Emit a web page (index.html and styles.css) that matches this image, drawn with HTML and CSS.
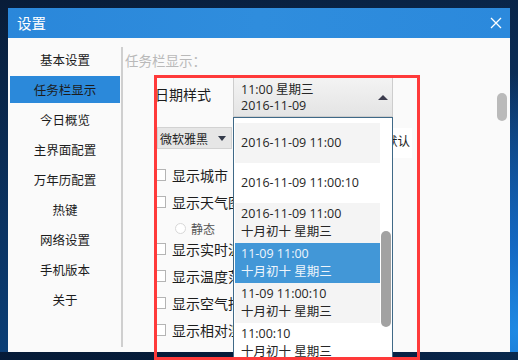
FILE: index.html
```html
<!DOCTYPE html>
<html lang="zh-CN">
<head>
  <meta charset="UTF-8" />
  <title>设置</title>
  <link rel="stylesheet" href="styles.css">
</head>
<body>
  <div class="window">
    <div class="titlebar">
      <span class="title">设置</span>
      <svg class="close" width="12" height="12" viewBox="0 0 12 12">
        <path d="M1 1L11 11M11 1L1 11" stroke="#fff" stroke-width="1.3" fill="none" />
      </svg>
    </div>

    <div class="main">
      <div class="sidebar">
        <div class="nav-item">基本设置</div>
        <div class="nav-item active">任务栏显示</div>
        <div class="nav-item">今日概览</div>
        <div class="nav-item">主界面配置</div>
        <div class="nav-item">万年历配置</div>
        <div class="nav-item">热键</div>
        <div class="nav-item">网络设置</div>
        <div class="nav-item">手机版本</div>
        <div class="nav-item">关于</div>
      </div>
      <div class="divider"></div>

      <div class="content">
        <div class="panel">
          <div class="heading">任务栏显示：</div>

          <div class="form">
            <div class="date-row">
              <span class="label">日期样式</span>
              <div class="combo">
                <div class="combo-box">
                  <div class="combo-text">
                    <div>11:00 星期三</div>
                    <div>2016-11-09</div>
                  </div>
                  <span class="arrow-up"></span>
                </div>

                <!-- open dropdown list -->
                <div class="dropdown">
                  <div class="rows">
                    <div class="opt">2016-11-09 11:00</div>
                    <div class="opt">2016-11-09 11:00:10</div>
                    <div class="opt"><div>2016-11-09 11:00</div><div>十月初十 星期三</div></div>
                    <div class="opt selected"><div>11-09 11:00</div><div>十月初十 星期三</div></div>
                    <div class="opt"><div>11-09 11:00:10</div><div>十月初十 星期三</div></div>
                    <div class="opt"><div>11:00:10</div><div>十月初十 星期三</div></div>
                  </div>
                  <div class="track"><div class="thumb"></div></div>
                </div>
              </div>
            </div>

            <div class="font-row">
              <div class="select">微软雅黑<span class="arrow-down"></span></div>
              <div class="btn-default">默认</div>
            </div>

            <div class="checks">
              <div class="check"><span class="box"></span>显示城市</div>
              <div class="check"><span class="box"></span>显示天气图标</div>
              <div class="radio-row"><span class="radio"></span>静态</div>
              <div class="check"><span class="box"></span>显示实时温度</div>
              <div class="check"><span class="box"></span>显示温度范围</div>
              <div class="check"><span class="box"></span>显示空气指数</div>
              <div class="check"><span class="box"></span>显示相对湿度</div>
            </div>
          </div>
        </div>
        <div class="vscroll"></div>
      </div>
    </div>

    <!-- red highlight frame -->
    <div class="callout"></div>
  </div>
</body>
</html>
```

FILE: styles.css
```css
html, body {
  height: 100%;
}

body {
  margin: 0;
  overflow: hidden;
  font-family: "Noto Sans CJK SC", sans-serif;
  background:
    linear-gradient(to bottom, transparent 352px, rgba(4, 18, 40, 0.8) 352px),
    radial-gradient(circle at 100% 92%, #1f8ae4 0, #1468c2 14%, transparent 42%),
    linear-gradient(170deg, #081c38 0%, #0b3362 50%, #0b4785 100%);
}

.window {
  position: relative;
  width: 502px;
  height: 344px;
  margin: 8px 0 0 8px;
  background-color: #fafafa;
}

.titlebar {
  display: flex;
  align-items: center;
  justify-content: space-between;
  height: 30px;
  padding: 0 8px 0 9px;
  background: linear-gradient(90deg, #2a87da, #2f8ddd 50%, #2b89dc);
  color: white;
}

.title {
  font-size: 14.5px;
  line-height: 20px;
}

.main {
  display: flex;
  height: 314px;
}

.sidebar {
  width: 113px;
  padding-top: 8px;
  box-sizing: border-box;
}

.nav-item {
  height: 27px;
  margin: 0 1px 3px 2px;
  line-height: 27px;
  text-align: center;
  font-size: 12.5px;
  color: #1c1c1c;
}

.nav-item.active {
  background-color: #2b89da;
}

.divider {
  width: 2px;
  margin: 9px 0 5px;
  background-color: #cfcfcf;
}

.content {
  flex: 1;
  display: flex;
}

.panel {
  flex: 1;
  padding: 13px 0 0 2px;
}

.vscroll {
  width: 10px;
  height: 28px;
  margin: 55px 3px 0 0;
  border-radius: 5px;
  background-color: #bababa;
}

.heading {
  font-size: 13.5px;
  line-height: 18px;
  color: #b9b9b9;
}

.form {
  margin: 8px 0 0 30px;
}

.date-row {
  display: flex;
  align-items: flex-start;
}

.label {
  width: 78px;
  padding-top: 8px;
  font-size: 14px;
  line-height: 18px;
  color: #1c1c1c;
}

.combo {
  position: relative;
  width: 160px;
}

.combo-box {
  display: flex;
  align-items: center;
  justify-content: space-between;
  height: 40px;
  box-sizing: border-box;
  padding: 1px 4px 0 7px;
  border: 1px solid #cdcdcd;
  background: linear-gradient(#f3f3f3, #e4e4e4);
}

.combo-text,
.opt {
  font-family: "Open Sans", "Noto Sans CJK SC", sans-serif;
  font-size: 12.5px;
  color: #262626;
}

.combo-text {
  line-height: 16px;
}

.arrow-up {
  width: 0;
  height: 0;
  border-left: 5px solid transparent;
  border-right: 5px solid transparent;
  border-bottom: 5px solid #3b3b4d;
}

.dropdown {
  position: absolute;
  top: 100%;
  left: 0;
  z-index: 2;
  display: flex;
  width: 160px;
  height: 245px;
  box-sizing: border-box;
  border: 1px solid #3f6987;
  border-bottom: none;
  background-color: white;
}

.rows {
  width: 145px;
  margin-left: 1px;
  padding-top: 5px;
}

.opt {
  display: flex;
  flex-direction: column;
  justify-content: center;
  height: 40px;
  padding-left: 6px;
  line-height: 18px;
  white-space: nowrap;
}

.opt:nth-child(odd) {
  background-color: #f4f4f4;
}

.opt.selected {
  background-color: #4297d7;
  color: #eef5fc;
}

.track {
  width: 12px;
}

.thumb {
  width: 10px;
  height: 96px;
  margin: 113px 0 0 1px;
  border-radius: 5px;
  background-color: #a2a2a2;
}

.font-row {
  display: flex;
  align-items: flex-start;
  margin-top: 10px;
}

.select {
  display: flex;
  align-items: center;
  justify-content: space-between;
  width: 75px;
  height: 22px;
  box-sizing: border-box;
  margin-left: 2px;
  padding: 0 5px 0 2px;
  border: 1px solid #d2d2d2;
  background-color: #e6e6e6;
  font-size: 12px;
  color: #222;
}

.arrow-down {
  width: 0;
  height: 0;
  border-left: 4.5px solid transparent;
  border-right: 4.5px solid transparent;
  border-top: 5px solid #333a4a;
}

.btn-default {
  width: 30px;
  height: 30px;
  box-sizing: border-box;
  margin: 1px 0 0 150px;
  padding: 4px 0 0 3px;
  background-color: white;
  font-size: 12.5px;
  line-height: 18px;
  color: #222;
  white-space: nowrap;
}

.checks {
  margin-top: 3px;
}

.check {
  display: flex;
  align-items: center;
  gap: 6px;
  height: 27px;
  font-size: 14px;
  color: #1c1c1c;
  white-space: nowrap;
}

.box {
  flex: none;
  width: 12px;
  height: 12px;
  box-sizing: border-box;
  margin-left: -1px;
  border: 1px solid #b4b4b4;
  background-color: white;
}

.radio-row {
  display: flex;
  align-items: center;
  gap: 5px;
  height: 20px;
  box-sizing: border-box;
  padding: 7px 0 0 20px;
  font-size: 12px;
  line-height: 13px;
  color: #555;
}

.radio {
  width: 11px;
  height: 11px;
  box-sizing: border-box;
  border: 1px solid #d8d8d8;
  border-radius: 50%;
  background-color: white;
}

.callout {
  position: absolute;
  left: 146px;
  top: 67px;
  z-index: 3;
  width: 266px;
  height: 285px;
  box-sizing: border-box;
  border: 3px solid #ff3a3a;
  pointer-events: none;
}
```
